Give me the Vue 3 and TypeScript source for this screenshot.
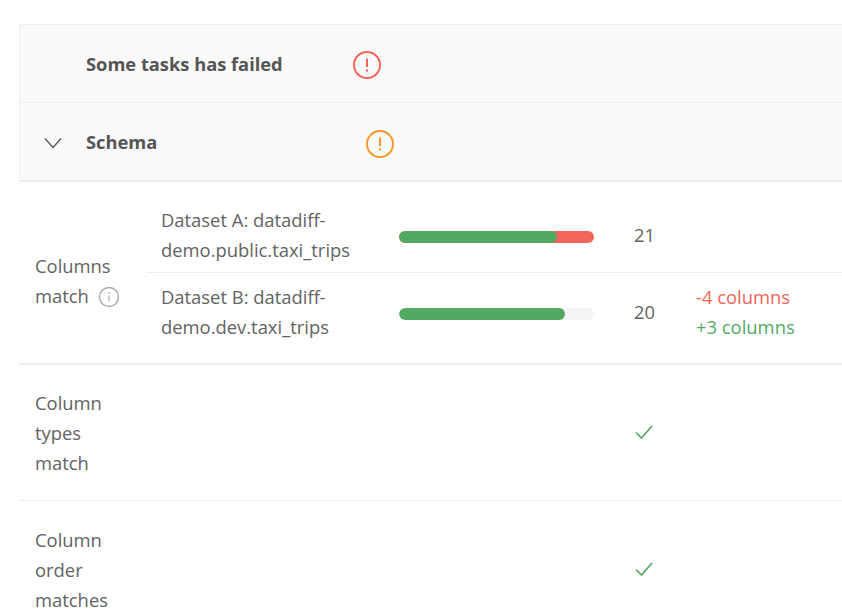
<script setup lang="ts">
interface Check { label: string[] }
const checks: Check[] = [
  { label: ['Column', 'types', 'match'] },
  { label: ['Column', 'order', 'matches'] },
]
const datasets = [
  { name: ['Dataset A: datadiff-', 'demo.public.taxi_trips'], green: 81, track: 'red', count: 21, diffs: false },
  { name: ['Dataset B: datadiff-', 'demo.dev.taxi_trips'], green: 85, track: 'grey', count: 20, diffs: true },
]
</script>

<template>
  <div class="page">
    <section class="card">
      <header class="head">
        <span class="chev"></span>
        <span class="title">Some tasks has failed</span>
        <svg class="alert first" width="30" height="30" viewBox="0 0 30 30" fill="none" stroke="#f1655a">
          <circle cx="15" cy="15" r="13" stroke-width="2" />
          <path d="M15 8.5v8.5" stroke-width="2" />
          <circle cx="15" cy="20.5" r="1.2" fill="#f1655a" stroke="none" />
        </svg>
      </header>
      <header class="head last">
        <span class="chev">
          <svg width="18" height="12" viewBox="0 0 18 12" fill="none" stroke="#555" stroke-width="1.3">
            <path d="M1 1.5l8 9 8-9" />
          </svg>
        </span>
        <span class="title">Schema</span>
        <svg class="alert second" width="30" height="30" viewBox="0 0 30 30" fill="none" stroke="#f7972b">
          <circle cx="15" cy="15" r="13" stroke-width="2" />
          <path d="M15 8.5v8.5" stroke-width="2" />
          <circle cx="15" cy="20.5" r="1.2" fill="#f7972b" stroke="none" />
        </svg>
      </header>

      <div class="row cols">
        <div class="label">
          <span>Columns</span>
          <span class="with-icon">match
            <svg class="info" width="22" height="22" viewBox="0 0 22 22" fill="none" stroke="#aaa">
              <circle cx="11" cy="11" r="9.5" stroke-width="1.4" />
              <path d="M11 9.5v6" stroke-width="1.2" />
              <circle cx="11" cy="6.8" r="0.9" fill="#aaa" stroke="none" />
            </svg>
          </span>
        </div>
        <div class="sets">
          <div v-for="d in datasets" :key="d.count" class="set">
            <div class="name"><span v-for="n in d.name" :key="n">{{ n }}</span></div>
            <div class="bar" :class="d.track"><div class="fill" :style="{ width: d.green + '%' }"></div></div>
            <div class="count">{{ d.count }}</div>
            <div v-if="d.diffs" class="diffs">
              <span class="minus">-4 columns</span>
              <span class="plus">+3 columns</span>
            </div>
          </div>
        </div>
      </div>

      <div v-for="c in checks" :key="c.label[1]" class="row check">
        <div class="label"><span v-for="l in c.label" :key="l">{{ l }}</span></div>
        <svg class="tick" width="20" height="16" viewBox="0 0 20 16" fill="none" stroke="#52aa62" stroke-width="1.7">
          <path d="M2 8.5l5.5 5.5L18 2" />
        </svg>
      </div>
    </section>
  </div>
</template>

<style>
html, body { margin: 0; overflow: hidden; height: 100%; background: #fff; }
</style>

<style scoped>
.page {
  height: 615px;
  overflow: hidden;
  padding: 24px 0 0 19px;
  box-sizing: border-box;
  font-family: "Open Sans", "Noto Sans", sans-serif;
  font-size: 18.4px;
  line-height: 30px;
  color: #636363;
}
.head {
  height: 78px;
  box-sizing: border-box;
  display: flex;
  align-items: center;
  background: #fafafa;
  border-top: 1px solid #efefef;
  border-left: 1px solid #efefef;
}
.head.last {
  height: 80px;
  border-bottom: 2px solid #ececec;
}
.chev {
  width: 66px;
  padding-left: 24px;
  padding-top: 2px;
  box-sizing: border-box;
  display: flex;
  align-items: center;
}
.title {
  font-weight: 700;
  font-size: 18.3px;
  color: #555;
}
.alert { margin-top: 2px; }
.alert.first { margin-left: 69px; }
.alert.second { margin-left: 208px; margin-top: 4px; }
.row { display: flex; }
.label {
  width: 127px;
  box-sizing: border-box;
  padding-left: 16px;
  display: flex;
  flex-direction: column;
}
.with-icon { display: flex; align-items: center; gap: 9px; }
.info { margin-top: 2px; }
.cols {
  height: 183px;
  box-sizing: border-box;
  border-bottom: 2px solid #ececec;
}
.cols .label { justify-content: center; padding-top: 16px; }
.sets { flex: 1; display: flex; flex-direction: column; }
.set {
  height: 90px;
  box-sizing: border-box;
  display: flex;
  align-items: center;
  padding: 16px 0 0 15px;
}
.set + .set {
  height: 91px;
  padding: 0 0 13px 15px;
  border-top: 1px solid #eee;
}
.name {
  width: 238px;
  flex: none;
  display: flex;
  flex-direction: column;
}
.bar {
  width: 195px;
  height: 12px;
  flex: none;
  margin-top: 4px;
  border-radius: 6px;
  overflow: hidden;
}
.bar.red { background: #f1655a; }
.bar.grey { background: #f4f4f4; }
.fill { height: 100%; background: #52aa62; border-radius: 6px; }
.count { width: 62px; margin-left: 40px; flex: none; }
.diffs { display: flex; flex-direction: column; }
.minus { color: #f1655a; }
.plus { color: #52aa62; }
.check {
  height: 136px;
  box-sizing: border-box;
  align-items: center;
  border-bottom: 1px solid #eee;
}
.tick { margin-left: 488px; margin-bottom: 2px; }
.check + .check .label { padding-top: 2px; }
.check + .check .tick { margin-bottom: 0; }
</style>
